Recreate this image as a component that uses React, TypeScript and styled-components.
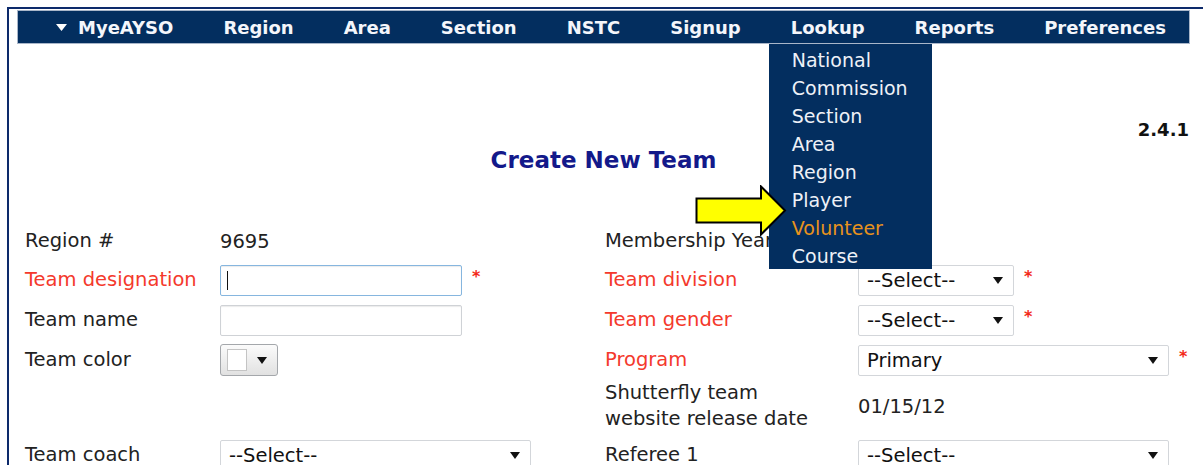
import React from 'react';
import styled, { createGlobalStyle } from 'styled-components';

const GlobalStyle = createGlobalStyle`
  html, body {
    margin: 0;
    padding: 0;
    background: #fff;
    overflow: hidden;
  }
  body {
    font-family: 'DejaVu Sans', Verdana, sans-serif;
    color: #222;
  }
`;

const navItems = ['MyeAYSO', 'Region', 'Area', 'Section', 'NSTC', 'Signup', 'Lookup', 'Reports', 'Preferences'];

const lookupItems = [
  'National',
  'Commission',
  'Section',
  'Area',
  'Region',
  'Player',
  'Volunteer',
  'Course',
];

function Caret() {
  return (
    <svg width="10" height="7" viewBox="0 0 10 7">
      <path d="M0 0 L10 0 L5 7 Z" fill="#111" />
    </svg>
  );
}

function SelectBox({ value, wide }: { value: string; wide?: boolean }) {
  return (
    <Select $wide={wide}>
      <span>{value}</span>
      <Caret />
    </Select>
  );
}

function App() {
  return (
    <>
      <GlobalStyle />
      <Frame>
        <NavBar>
          {navItems.map((item, i) => (
            <NavItem key={item}>
              {i === 0 && (
                <svg width="11" height="7" viewBox="0 0 11 7">
                  <path d="M0 0 L11 0 L5.5 7 Z" fill="#fff" />
                </svg>
              )}
              {item}
              {item === 'Lookup' && (
                <Dropdown>
                  {lookupItems.map((sub) => (
                    <DropItem key={sub} $active={sub === 'Volunteer'}>
                      {sub}
                    </DropItem>
                  ))}
                  <Pointer width="92" height="51" viewBox="0 0 92 51">
                    <path
                      d="M1.5 13.5 L66 13.5 L66 1.5 L90 25.5 L66 49.5 L66 37.5 L1.5 37.5 Z"
                      fill="#ffff00"
                      stroke="#000"
                      strokeWidth="2"
                      strokeLinejoin="miter"
                    />
                  </Pointer>
                </Dropdown>
              )}
            </NavItem>
          ))}
        </NavBar>

        <Main>
          <Version>2.4.1</Version>
          <Title>Create New Team</Title>

          <FormGrid>
            <Label>Region #</Label>
            <Field>9695</Field>
            <Label>Membership Year</Label>
            <Field />

            <Label $required>Team designation</Label>
            <Field>
              <TextBox $focused>
                <CaretLine />
              </TextBox>
              <Star>*</Star>
            </Field>
            <Label $required>Team division</Label>
            <Field>
              <SelectBox value="--Select--" />
              <Star>*</Star>
            </Field>

            <Label>Team name</Label>
            <Field>
              <TextBox />
            </Field>
            <Label $required>Team gender</Label>
            <Field>
              <SelectBox value="--Select--" />
              <Star>*</Star>
            </Field>

            <Label>Team color</Label>
            <Field>
              <ColorButton>
                <Swatch />
                <Caret />
              </ColorButton>
            </Field>
            <Label $required>Program</Label>
            <Field>
              <SelectBox value="Primary" wide />
              <Star>*</Star>
            </Field>

            <Label />
            <Field />
            <Label>
              Shutterfly team
              <br />
              website release date
            </Label>
            <Field>01/15/12</Field>

            <Label>Team coach</Label>
            <Field>
              <SelectBox value="--Select--" wide />
            </Field>
            <Label>Referee 1</Label>
            <Field>
              <SelectBox value="--Select--" wide />
            </Field>
          </FormGrid>
        </Main>
      </Frame>
    </>
  );
}

export default App;

const Frame = styled.div`
  margin: 7px 0 0 7px;
  padding: 1px 13px 0 8px;
  min-height: 470px;
  border-top: 2px solid #0d2a6b;
  border-left: 2px solid #0d2a6b;
`;

const NavBar = styled.nav`
  display: flex;
  align-items: stretch;
  gap: 50px;
  height: 32px;
  padding-left: 38px;
  background: #032e5f;
  border: 1px solid #a9b6c9;
`;

const NavItem = styled.div`
  position: relative;
  display: flex;
  align-items: center;
  gap: 11px;
  color: #f4f6fb;
  font-size: 18px;
  font-weight: bold;
  white-space: nowrap;
`;

const Dropdown = styled.div`
  position: absolute;
  top: 100%;
  left: -22px;
  margin-top: 1px;
  width: 163px;
  padding: 2px 0 0;
  height: 223px;
  background: #032e5f;
  z-index: 5;
`;

const DropItem = styled.div<{ $active?: boolean }>`
  padding-left: 23px;
  height: 28px;
  line-height: 28px;
  font-size: 19px;
  font-weight: normal;
  color: ${(props) => (props.$active ? '#e8931c' : '#eef1f7')};
`;

const Pointer = styled.svg`
  position: absolute;
  left: -74px;
  top: 141px;
`;

const Main = styled.div`
  display: flex;
  flex-direction: column;
`;

const Version = styled.div`
  margin-top: 75px;
  text-align: right;
  padding-right: 1px;
  font-size: 18px;
  line-height: 22px;
  font-weight: bold;
  color: #111;
`;

const Title = styled.h1`
  margin: 5px 0 0;
  text-align: center;
  font-size: 23px;
  line-height: 28px;
  font-weight: bold;
  color: #13198a;
`;

const FormGrid = styled.div`
  display: grid;
  grid-template-columns: 195px 385px 253px 1fr;
  grid-template-rows: 38px 40px 40px 40px 52px 46px;
  margin-top: 48px;
  padding-left: 8px;
  font-size: 19.5px;
`;

const Label = styled.div<{ $required?: boolean }>`
  display: flex;
  align-items: center;
  line-height: 26px;
  color: ${(props) => (props.$required ? '#f4392c' : '#222')};
`;

const Field = styled.div`
  display: flex;
  align-items: center;
  gap: 8px;
  color: #222;
`;

const TextBox = styled.div<{ $focused?: boolean }>`
  box-sizing: border-box;
  display: flex;
  align-items: center;
  width: 242px;
  height: 31px;
  padding-left: 6px;
  background: #fff;
  border: 1px solid ${(props) => (props.$focused ? '#86b6df' : '#cfd2d6')};
  border-radius: 2px;
  box-shadow: inset 0 1px 1px rgba(0, 0, 0, 0.08);
`;

const CaretLine = styled.span`
  width: 1px;
  height: 19px;
  background: #111;
`;

const Star = styled.span`
  align-self: flex-start;
  margin-top: 7px;
  margin-left: 2px;
  font-size: 16px;
  font-weight: bold;
  color: #f32818;
`;

const Select = styled.div<{ $wide?: boolean }>`
  box-sizing: border-box;
  display: flex;
  align-items: center;
  justify-content: space-between;
  width: ${(props) => (props.$wide ? '311px' : '156px')};
  height: 31px;
  padding: 0 10px 0 8px;
  background: #fff;
  border: 1px solid #d3d6da;
  border-radius: 2px;
  color: #111;
`;

const ColorButton = styled.div`
  box-sizing: border-box;
  display: flex;
  align-items: center;
  gap: 10px;
  width: 58px;
  height: 32px;
  padding-left: 6px;
  border: 1px solid #a4a7ab;
  border-radius: 3px;
  background: linear-gradient(#fbfbfb, #e1e1e1);
`;

const Swatch = styled.span`
  width: 18px;
  height: 20px;
  background: #fff;
  border: 1px solid #c4c4c4;
`;
